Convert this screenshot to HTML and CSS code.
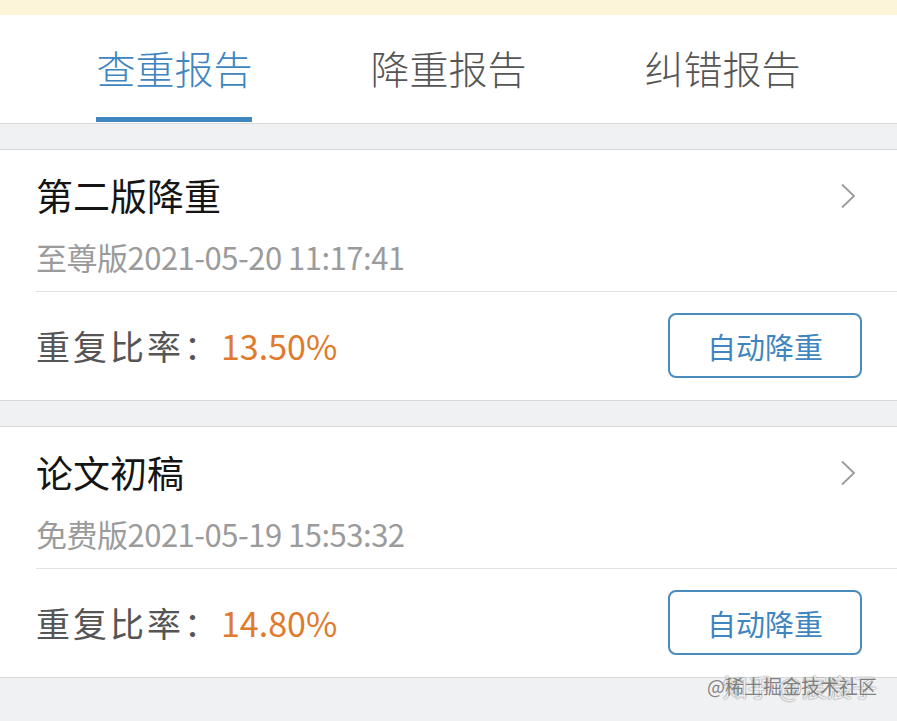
FILE: index.html
```html
<!DOCTYPE html>
<html lang="zh-CN">
<head>
<meta charset="utf-8">
<title>查重报告</title>
<link rel="stylesheet" href="styles.css">
</head>
<body>
<div class="notice"></div>
<nav class="tabs">
  <div class="tab active"><span class="tab-label">查重报告</span><span class="tab-bar"></span></div>
  <div class="tab"><span class="tab-label">降重报告</span><span class="tab-bar"></span></div>
  <div class="tab"><span class="tab-label">纠错报告</span><span class="tab-bar"></span></div>
</nav>
<section class="card">
  <div class="card-head">
    <div class="card-info">
      <div class="card-title">第二版降重</div>
      <div class="card-sub">至尊版2021-05-20 11:17:41</div>
    </div>
    <svg class="chevron" width="16" height="26" viewBox="0 0 16 26"><path d="M2 1.5 L14 13 L2 24.5" fill="none" stroke="#9a9a9a" stroke-width="1.8"/></svg>
  </div>
  <div class="card-foot">
    <div class="rate"><span class="rate-label">重复比率：</span><span class="rate-value">13.50%</span></div>
    <button class="btn">自动降重</button>
  </div>
</section>
<section class="card">
  <div class="card-head">
    <div class="card-info">
      <div class="card-title">论文初稿</div>
      <div class="card-sub">免费版2021-05-19 15:53:32</div>
    </div>
    <svg class="chevron" width="16" height="26" viewBox="0 0 16 26"><path d="M2 1.5 L14 13 L2 24.5" fill="none" stroke="#9a9a9a" stroke-width="1.8"/></svg>
  </div>
  <div class="card-foot">
    <div class="rate"><span class="rate-label">重复比率：</span><span class="rate-value">14.80%</span></div>
    <button class="btn">自动降重</button>
  </div>
</section>
<div class="watermark">
  <span class="wm-a">知乎 @宸宸子</span>
  <span class="wm-b">@稀土掘金技术社区</span>
</div>
</body>
</html>
```
FILE: styles.css
```css
* { box-sizing: border-box; }
html, body { margin: 0; padding: 0; }
body {
  width: 897px;
  height: 721px;
  overflow: hidden;
  background: #f0f1f3;
  font-family: "Noto Sans CJK SC", "Noto Sans", sans-serif;
  position: relative;
}
.notice {
  height: 15px;
  background: #fcf5d9;
}
.tabs {
  height: 109px;
  background: #fff;
  border-bottom: 1px solid #d9d9d9;
  display: flex;
  justify-content: center;
  gap: 118px;
}
.tab {
  display: flex;
  flex-direction: column;
  align-items: stretch;
  justify-content: flex-end;
}
.tab-label {
  font-size: 39px;
  font-weight: 300;
  line-height: 50px;
  color: #555;
  margin-bottom: 25px;
  white-space: nowrap;
}
.tab-bar {
  height: 5px;
  margin-bottom: 1px;
  background: transparent;
}
.tab.active .tab-label { color: #3f86c1; }
.tab.active .tab-bar { background: #3f86c1; }
.card {
  margin-top: 25px;
  background: #fff;
  border-top: 1px solid #d9d9d9;
  border-bottom: 1px solid #d9d9d9;
}
.card-head {
  margin-left: 36px;
  padding: 21px 41px 14px 0;
  border-bottom: 1px solid #e2e2e2;
  display: flex;
  justify-content: space-between;
  align-items: flex-start;
}
.card-title {
  font-size: 37px;
  line-height: 48px;
  color: #151515;
}
.card-sub {
  margin-top: 18px;
  font-size: 31px;
  line-height: 40px;
  color: #9b9b9b;
  letter-spacing: -0.5px;
  white-space: nowrap;
}
.chevron {
  margin-top: 12px;
}
.card-foot {
  height: 108px;
  padding: 0 35px 0 36px;
  display: flex;
  align-items: center;
  justify-content: space-between;
}
.rate {
  font-size: 34px;
  line-height: 44px;
  white-space: nowrap;
}
.rate-label { color: #555; letter-spacing: 3px; }
.rate-value { color: #e07a2c; }
.btn {
  width: 194px;
  height: 65px;
  margin-top: -1px;
  border: 2px solid #4a8bbd;
  border-radius: 8px;
  background: #fff;
  color: #3f86c1;
  font-family: inherit;
  font-size: 29px;
  padding: 0;
  cursor: pointer;
}
.watermark {
  position: absolute;
  right: 20px;
  bottom: 22px;
  width: 172px;
  height: 26px;
}
.wm-a, .wm-b {
  position: absolute;
  right: 0;
  top: 0;
  white-space: nowrap;
}
.wm-a {
  font-size: 25px;
  line-height: 26px;
  color: rgba(255, 255, 255, 0.9);
  text-shadow: 0 0 1px rgba(0,0,0,0.5), 0 0 2px rgba(0,0,0,0.25);
}
.wm-b {
  font-size: 19px;
  line-height: 26px;
  color: rgba(110, 110, 110, 0.85);
}
```
